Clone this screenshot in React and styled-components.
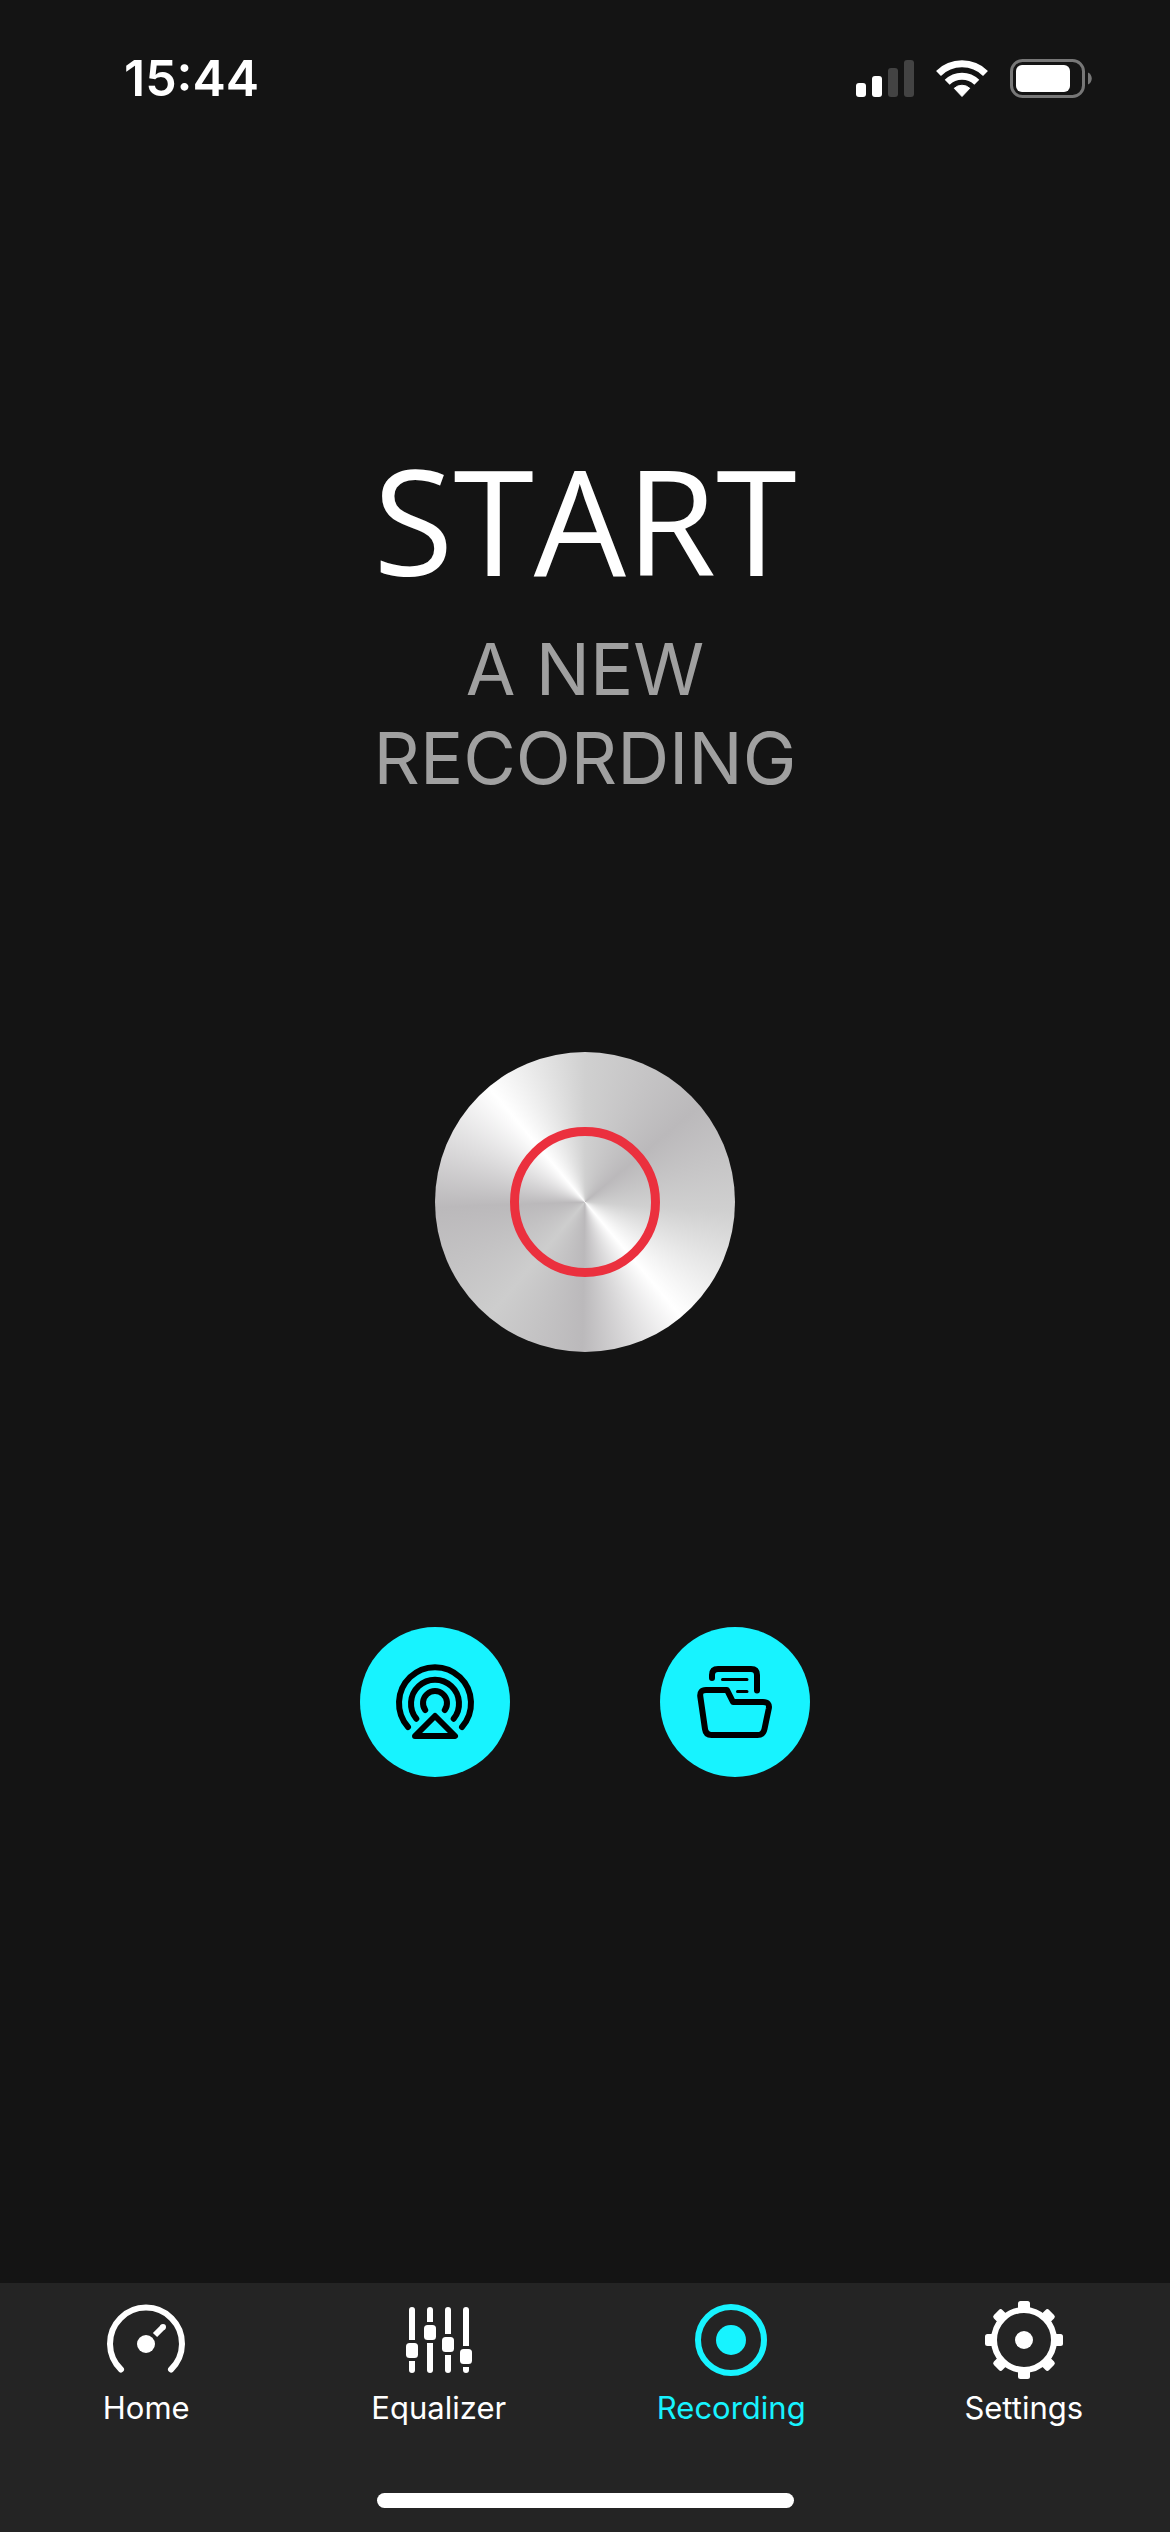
import React, { useState } from "react";
import styled, { createGlobalStyle } from "styled-components";

const GlobalStyle = createGlobalStyle`
  * {
    box-sizing: border-box;
  }
  body {
    margin: 0;
    background: #141414;
    color: #fff;
    font-family: Inter, "Liberation Sans", sans-serif;
  }
  button {
    border: none;
    padding: 0;
    cursor: pointer;
  }
`;

function SignalIcon() {
  return (
    <svg width="58" height="39" viewBox="0 0 58 39" fill="#fff">
      <rect x="0" y="24" width="10" height="14" rx="3" />
      <rect x="16" y="17" width="10" height="21" rx="3" />
      <rect x="32" y="9" width="10" height="29" rx="3" fill="#434343" />
      <rect x="48" y="1" width="10" height="37" rx="3" fill="#434343" />
    </svg>
  );
}

function WifiIcon() {
  return (
    <svg width="52" height="39" viewBox="0 0 52 39" fill="none" stroke="#fff" strokeWidth="7">
      <path d="M2.5 14.5A33.5 33.5 0 0 1 49.5 14.5" />
      <path d="M11.2 23.3A21 21 0 0 1 40.8 23.3" />
      <path d="M26 37.5L18.2 29.3A11.5 11.5 0 0 1 33.8 29.3Z" fill="#fff" stroke="#fff" strokeWidth="1" strokeLinejoin="round" />
    </svg>
  );
}

function BatteryIcon() {
  return (
    <svg width="82" height="39" viewBox="0 0 82 39">
      <rect x="1.5" y="1.5" width="72" height="36" rx="11" fill="none" stroke="#777" strokeWidth="3" />
      <rect x="6" y="6" width="54" height="27" rx="6" fill="#fff" />
      <path d="M78 13.5c5 2 5 10 0 12z" fill="#777" />
    </svg>
  );
}

function AirplayIcon() {
  return (
    <Glyph viewBox="0 0 90 90">
      <path d="M18 70A36 36 0 1 1 72 70" />
      <path d="M26.3 61.7A24 24 0 1 1 63.7 61.7" />
      <path d="M35.2 53A12 12 0 1 1 54.8 53" />
      <path d="M45 59L65 79H25Z" />
    </Glyph>
  );
}

function FolderIcon() {
  return (
    <Glyph viewBox="0 0 90 90">
      <path d="M22 21V18Q22 12 28 12H61Q67 12 67 18V33.5" />
      <path d="M32.5 22.5H57M47.5 34.5H57" strokeWidth="3" />
      <path d="M16 33H37L43 45H73Q80 45 78.8 51.5L74.5 72Q73.3 78 67.5 78H21.5Q15.8 78 15 72L10.3 39.5Q9.5 33 16 33Z" />
    </Glyph>
  );
}

function HomeIcon() {
  return (
    <Glyph viewBox="0 0 90 90">
      <path d="M20 74.5A36 36 0 1 1 70 74.5" />
      <circle cx="45" cy="49" r="9" fill="currentColor" stroke="none" />
      <circle cx="62" cy="32" r="3" fill="currentColor" stroke="none" />
      <path d="M54 40L62 32" strokeLinecap="butt" />
    </Glyph>
  );
}

function EqualizerIcon() {
  // x of each slider and the top of its thumb
  const sliders = [
    [18, 48],
    [36, 30],
    [54, 42],
    [72, 54],
  ];
  return (
    <Glyph viewBox="0 0 90 90">
      {sliders.map(([x, y]) => (
        <g key={x} fill="currentColor" stroke="none">
          <path d={`M${x - 3} ${y - 3}V15a3 3 0 0 1 6 0V${y - 3}Z`} />
          <rect x={x - 6} y={y} width="12" height="15" rx="3.5" />
          <path d={`M${x - 3} ${y + 18}V75a3 3 0 0 0 6 0V${y + 18}Z`} />
        </g>
      ))}
    </Glyph>
  );
}

function RecordingIcon() {
  return (
    <Glyph viewBox="0 0 90 90">
      <circle cx="45" cy="45" r="33" />
      <circle cx="45" cy="45" r="15" fill="currentColor" stroke="none" />
    </Glyph>
  );
}

function SettingsIcon() {
  return (
    <Glyph viewBox="0 0 90 90">
      <circle cx="45" cy="45" r="30" />
      <g fill="currentColor" stroke="none">
        <circle cx="45" cy="45" r="9" />
        {[0, 45, 90, 135, 180, 225, 270, 315].map((angle) => (
          <rect key={angle} x="39" y="6" width="12" height="10" rx="2.5" transform={`rotate(${angle} 45 45)`} />
        ))}
      </g>
    </Glyph>
  );
}

const tabs = [
  { name: "Home", icon: HomeIcon },
  { name: "Equalizer", icon: EqualizerIcon },
  { name: "Recording", icon: RecordingIcon },
  { name: "Settings", icon: SettingsIcon },
];

function App() {
  const [active, setActive] = useState("Recording");

  return (
    <Screen>
      <GlobalStyle />
      <StatusBar>
        <Time>15:44</Time>
        <StatusIcons>
          <SignalIcon />
          <WifiIcon />
          <BatteryIcon />
        </StatusIcons>
      </StatusBar>
      <Main>
        <Title>START</Title>
        <Subtitle>
          A NEW
          <br />
          RECORDING
        </Subtitle>
        <RecordButton aria-label="Start recording">
          <RecordRing />
        </RecordButton>
        <Actions>
          <RoundButton aria-label="AirPlay">
            <AirplayIcon />
          </RoundButton>
          <RoundButton aria-label="Recordings">
            <FolderIcon />
          </RoundButton>
        </Actions>
      </Main>
      <Footer>
        <TabBar>
          {tabs.map(({ name, icon: Icon }) => (
            <Tab key={name} $active={name === active} onClick={() => setActive(name)}>
              <Icon />
              {name}
            </Tab>
          ))}
        </TabBar>
        <HomeIndicator />
      </Footer>
    </Screen>
  );
}

const Screen = styled.div`
  display: flex;
  flex-direction: column;
  min-height: 100vh;
`;

const StatusBar = styled.header`
  display: flex;
  align-items: center;
  justify-content: space-between;
  padding: 48px 78px 48px 124px;
`;

const Time = styled.span`
  font-size: 50px;
  line-height: 60px;
  font-weight: 600;
`;

const StatusIcons = styled.div`
  display: flex;
  align-items: center;
  gap: 22px;
`;

const Main = styled.main`
  display: flex;
  flex: 1;
  flex-direction: column;
  align-items: center;
  padding-top: 274px;
`;

const Title = styled.h1`
  margin: 0;
  font-family: "Open Sans", "Noto Sans", sans-serif;
  font-size: 146px;
  line-height: 180px;
  font-weight: 400;
`;

const Subtitle = styled.p`
  margin: 14px 0 0;
  color: #a0a0a0;
  font-size: 72px;
  line-height: 89px;
  text-align: center;
`;

const RecordButton = styled.button`
  display: flex;
  align-items: center;
  justify-content: center;
  width: 300px;
  height: 300px;
  margin-top: 250px;
  border-radius: 50%;
  background: conic-gradient(
    #d0d0d0 0deg,
    #bbb9bb 50deg,
    #d0d0d0 94deg,
    #fff 140deg,
    #bbb9bb 181deg,
    #cdcdcd 220deg,
    #bbb9bb 268deg,
    #fff 320deg,
    #d0d0d0 360deg
  );
`;

const RecordRing = styled.span`
  width: 150px;
  height: 150px;
  border: 9px solid #eb303e;
  border-radius: 50%;
`;

const Actions = styled.div`
  display: flex;
  gap: 150px;
  margin-top: 275px;
`;

const RoundButton = styled.button`
  display: flex;
  align-items: center;
  justify-content: center;
  width: 150px;
  height: 150px;
  border-radius: 50%;
  background: #17f3ff;
  color: #000;
`;

const Glyph = styled.svg`
  display: block;
  width: 90px;
  height: 90px;
  fill: none;
  stroke: currentColor;
  stroke-width: 6px;
  stroke-linecap: round;
  stroke-linejoin: round;

  path[stroke-width="3"] {
    stroke-width: 3px;
  }
`;

const Footer = styled.footer`
  display: flex;
  flex-direction: column;
  align-items: center;
  padding: 12px 0 24px;
  background: #242424;
`;

const TabBar = styled.nav`
  display: grid;
  grid-template-columns: repeat(4, 1fr);
  width: 100%;
  margin-bottom: 66px;
`;

const Tab = styled.button`
  display: flex;
  flex-direction: column;
  align-items: center;
  gap: 4px;
  background: none;
  color: ${({ $active }) => ($active ? "#17f3ff" : "#fff")};
  font-family: inherit;
  font-size: 31px;
  line-height: 38px;
  font-weight: 400;
`;

const HomeIndicator = styled.div`
  width: 417px;
  height: 15px;
  border-radius: 8px;
  background: #fff;
`;

export default App;
